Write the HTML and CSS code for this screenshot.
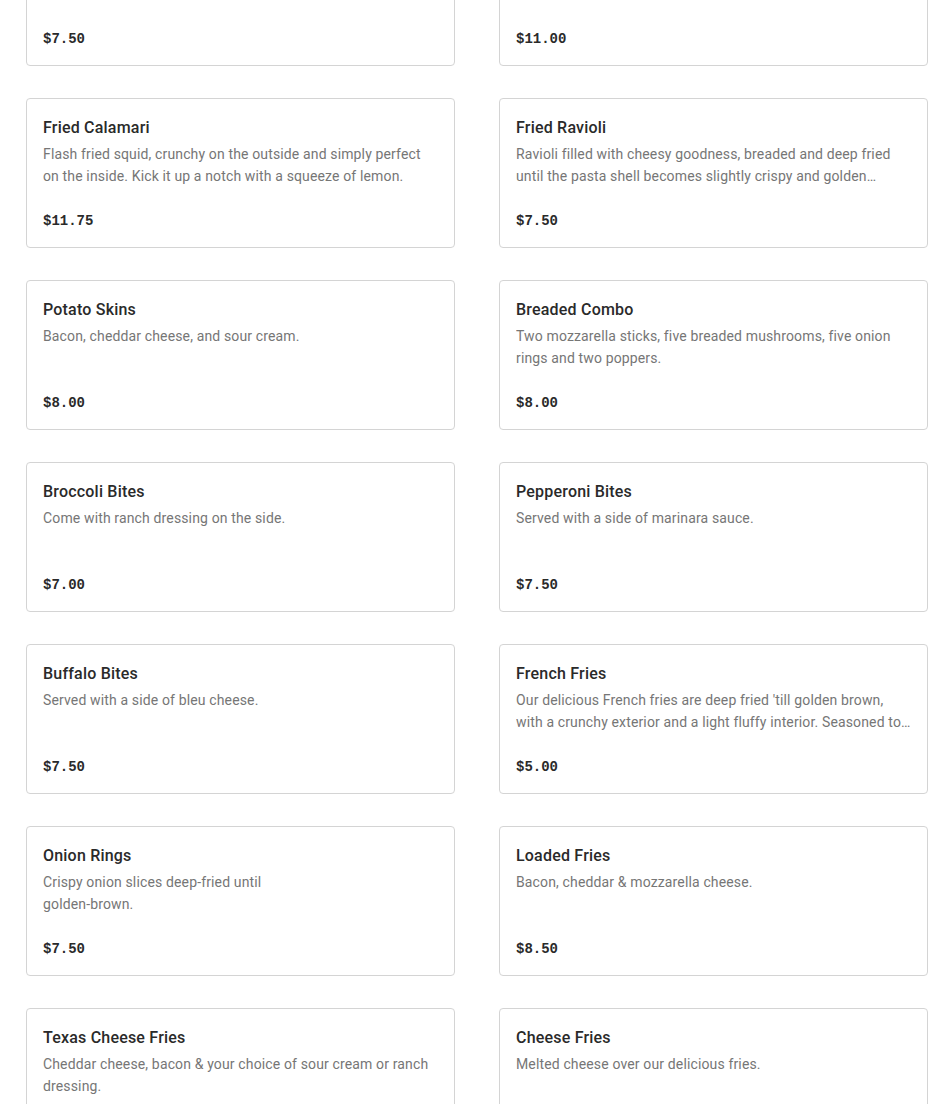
FILE: index.html
```html
<!DOCTYPE html>
<html lang="en">
<head>
<meta charset="utf-8">
<title>Menu</title>
<link rel="stylesheet" href="styles.css">
</head>
<body>
<main class="menu">
  <div class="grid">
    <article class="card"><h3 class="title">Mozzarella Sticks</h3><p class="desc">Served with a side of marinara sauce.</p><div class="price">$7.50</div></article>
    <article class="card"><h3 class="title">Chicken Wings</h3><p class="desc">Choice of buffalo, BBQ or garlic parmesan.</p><div class="price">$11.00</div></article>

    <article class="card"><h3 class="title">Fried Calamari</h3><p class="desc">Flash fried squid, crunchy on the outside and simply perfect on the inside. Kick it up a notch with a squeeze of lemon.</p><div class="price">$11.75</div></article>
    <article class="card"><h3 class="title">Fried Ravioli</h3><p class="desc">Ravioli filled with cheesy goodness, breaded and deep fried until the pasta shell becomes slightly crispy and golden brown. Served with marinara sauce.</p><div class="price">$7.50</div></article>

    <article class="card"><h3 class="title">Potato Skins</h3><p class="desc">Bacon, cheddar cheese, and sour cream.</p><div class="price">$8.00</div></article>
    <article class="card"><h3 class="title">Breaded Combo</h3><p class="desc">Two mozzarella sticks, five breaded mushrooms, five onion rings and two poppers.</p><div class="price">$8.00</div></article>

    <article class="card"><h3 class="title">Broccoli Bites</h3><p class="desc">Come with ranch dressing on the side.</p><div class="price">$7.00</div></article>
    <article class="card"><h3 class="title">Pepperoni Bites</h3><p class="desc">Served with a side of marinara sauce.</p><div class="price">$7.50</div></article>

    <article class="card"><h3 class="title">Buffalo Bites</h3><p class="desc">Served with a side of bleu cheese.</p><div class="price">$7.50</div></article>
    <article class="card"><h3 class="title">French Fries</h3><p class="desc">Our delicious French fries are deep fried 'till golden brown, with a crunchy exterior and a light fluffy interior. Seasoned to perfection.</p><div class="price">$5.00</div></article>

    <article class="card"><h3 class="title">Onion Rings</h3><p class="desc">Crispy onion slices deep-fried until<br>golden-brown.</p><div class="price">$7.50</div></article>
    <article class="card"><h3 class="title">Loaded Fries</h3><p class="desc">Bacon, cheddar &amp; mozzarella cheese.</p><div class="price">$8.50</div></article>

    <article class="card"><h3 class="title">Texas Cheese Fries</h3><p class="desc">Cheddar cheese, bacon &amp; your choice of sour cream or ranch dressing.</p><div class="price">$8.50</div></article>
    <article class="card"><h3 class="title">Cheese Fries</h3><p class="desc">Melted cheese over our delicious fries.</p><div class="price">$6.50</div></article>
  </div>
</main>
</body>
</html>
```
FILE: styles.css
```css
html, body {
  margin: 0;
  padding: 0;
  background: #ffffff;
  overflow: hidden;
}
body {
  font-family: Roboto, "Liberation Sans", sans-serif;
  color: #222222;
}
.menu {
  padding-left: 26px;
  margin-top: -84px;
}
.grid {
  display: grid;
  grid-template-columns: 429px 429px;
  column-gap: 44px;
  row-gap: 32px;
}
.card {
  box-sizing: border-box;
  height: 150px;
  border: 1px solid #d4d4d4;
  border-radius: 4px;
  padding: 16px 16px 16px 16px;
  display: flex;
  flex-direction: column;
}
.title {
  margin: 0;
  padding-top: 1px;
  font-size: 16px;
  line-height: 24px;
  font-weight: 500;
  letter-spacing: 0.2px;
  color: #2a2a2a;
}
.desc {
  margin: 3px 0 0 0;
  font-size: 14px;
  line-height: 22px;
  letter-spacing: 0.14px;
  color: #767676;
  display: -webkit-box;
  -webkit-line-clamp: 2;
  -webkit-box-orient: vertical;
  overflow: hidden;
}
.price {
  margin-top: auto;
  font-family: "Liberation Mono", "DejaVu Sans Mono", monospace;
  font-weight: 700;
  font-size: 14px;
  line-height: 20px;
  color: #2a2a2a;
}
```
